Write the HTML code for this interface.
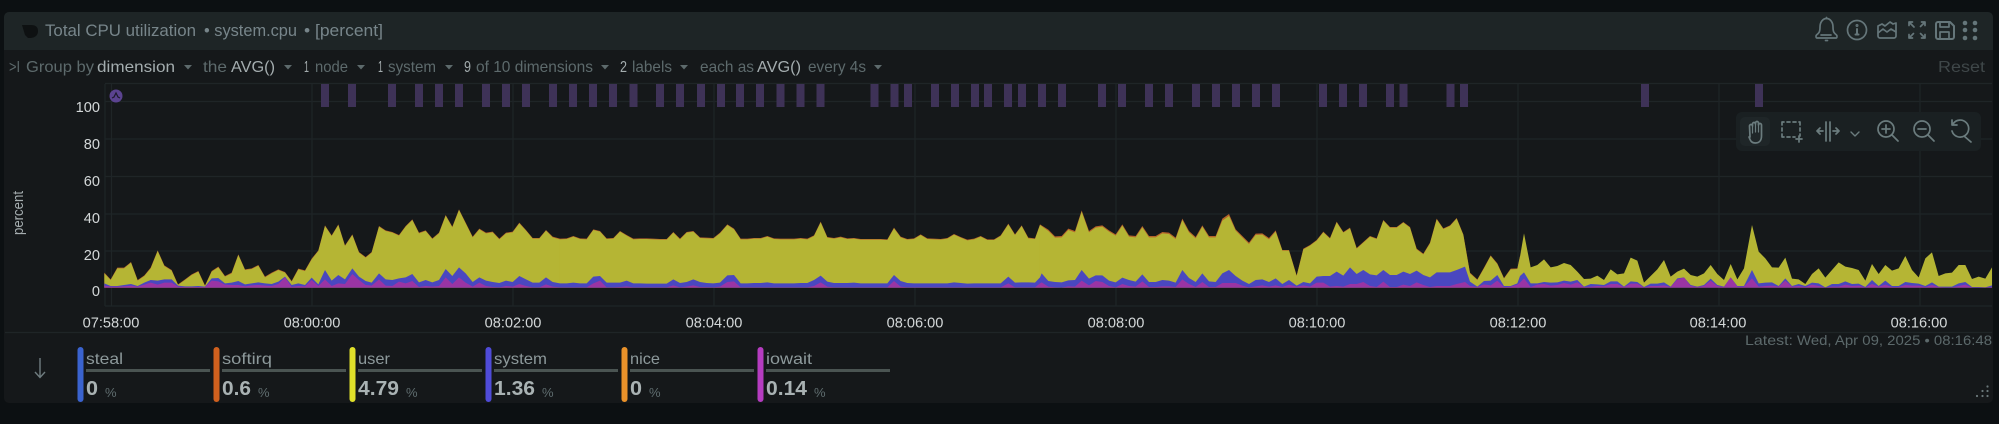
<!DOCTYPE html>
<html><head><meta charset="utf-8"><style>
html,body{margin:0;padding:0;background:#0c1012;width:1999px;height:424px;overflow:hidden}
svg{display:block;filter:blur(.35px)}
text{font-family:"Liberation Sans",sans-serif}
.t{fill:#77858a;font-size:16.5px}
.f{fill:#5d6a6c;font-size:16px}
.b{fill:#a4adaf;font-size:16px}
.ax{fill:#d3d7d8;font-size:14.6px}
.n{fill:#8d999b;font-size:16px}
.v{fill:#a9b2b3;font-size:20px;font-weight:bold}
.u{fill:#5f6d6f;font-size:13px}
.ic{fill:none;stroke:#65767a;stroke-width:1.7;stroke-linecap:round;stroke-linejoin:round}
.ti{fill:none;stroke:#6b7c7e;stroke-width:1.7;stroke-linecap:round;stroke-linejoin:round}
</style></head><body>
<svg width="1999" height="424" viewBox="0 0 1999 424" xmlns="http://www.w3.org/2000/svg">
<rect width="1999" height="424" fill="#0c1012"/>
<rect x="4" y="12" width="1989" height="391" rx="5" fill="#15181a"/>
<path d="M4 50V17a5 5 0 0 1 5-5H1988a5 5 0 0 1 5 5V50Z" fill="#1e2526"/>
<path d="M22 25h9q7 0 7 6t-7 7h-3l-3-3Z" fill="#0e1112"/>
<text class="t" x="45" y="36" textLength="151" lengthAdjust="spacingAndGlyphs">Total CPU utilization</text>
<text class="t" x="204" y="36" textLength="93" lengthAdjust="spacingAndGlyphs">• system.cpu</text>
<text class="t" x="304" y="36" textLength="79" lengthAdjust="spacingAndGlyphs">• [percent]</text>

<!-- header icons -->
<g class="ic">
<path d="M1817 38h19c1 0 1.500-2 .5-3-2.500-2-3.500-3-3.500-8 0-5-3-8.500-6.500-8.500s-6.500 3.500-6.500 8.500c0 5-1 6-3.500 8-1 1-.5 3 .5 3Z"/><path d="M1826.500 18.500v-1"/><path d="M1821 35h10"/><path d="M1825.500 40.500h2"/>
<circle cx="1857" cy="30" r="9.500"/><path d="M1857 29v5.500M1855.500 34.500h3" stroke-width="2"/><circle cx="1857" cy="25.500" r=".6" stroke-width="1.800"/>
<path d="M1878 26l4-2 3 2 5-4 3 2 3-1v13a2 2 0 0 1-2 2h-14a2 2 0 0 1-2-2Z"/><path d="M1878 33l5-4 4 3 4-3 5 3"/>
<path d="M1909 22l5 5M1909 22v3.500M1909 22h3.500M1925 22l-4.500 4.500M1925 22v3.500M1925 22h-3.500M1909 38l4.500-4.500M1909 38v-3.500M1909 38h3.500M1925 38l-4.500-4.500M1925 38v-3.500M1925 38h-3.500"/>
<path d="M1936 24a2 2 0 0 1 2-2h12l4 4v11a2 2 0 0 1-2 2h-14a2 2 0 0 1-2-2Z" stroke-width="2"/><path d="M1940 22v5h9v-5M1940 39v-7h9v7"/>
</g>
<g fill="#65767a"><circle cx="1965" cy="23" r="2.300"/><circle cx="1975" cy="23" r="2.300"/><circle cx="1965" cy="30" r="2.300"/><circle cx="1975" cy="30" r="2.300"/><circle cx="1965" cy="38" r="2.300"/><circle cx="1975" cy="38" r="2.300"/></g>

<!-- filter row -->
<text class="f" x="9" y="72" textLength="11" lengthAdjust="spacingAndGlyphs">&gt;I</text>
<text class="f" x="26" y="72" textLength="68" lengthAdjust="spacingAndGlyphs">Group by</text>
<text class="b" x="97" y="72" textLength="78" lengthAdjust="spacingAndGlyphs">dimension</text>
<text class="f" x="203" y="72" textLength="24" lengthAdjust="spacingAndGlyphs">the</text>
<text class="b" x="231" y="72" textLength="44" lengthAdjust="spacingAndGlyphs">AVG()</text>
<text class="b" x="304" y="72" textLength="5" lengthAdjust="spacingAndGlyphs">1</text>
<text class="f" x="315" y="72" textLength="33" lengthAdjust="spacingAndGlyphs">node</text>
<text class="b" x="378" y="72" textLength="5" lengthAdjust="spacingAndGlyphs">1</text>
<text class="f" x="388" y="72" textLength="48" lengthAdjust="spacingAndGlyphs">system</text>
<text class="b" x="464" y="72" textLength="7" lengthAdjust="spacingAndGlyphs">9</text>
<text class="f" x="476" y="72" textLength="117" lengthAdjust="spacingAndGlyphs">of 10 dimensions</text>
<text class="b" x="620" y="72" textLength="7" lengthAdjust="spacingAndGlyphs">2</text>
<text class="f" x="632" y="72" textLength="40" lengthAdjust="spacingAndGlyphs">labels</text>
<text class="f" x="700" y="72" textLength="54" lengthAdjust="spacingAndGlyphs">each as</text>
<text class="b" x="757" y="72" textLength="44" lengthAdjust="spacingAndGlyphs">AVG()</text>
<text class="f" x="808" y="72" textLength="58" lengthAdjust="spacingAndGlyphs">every 4s</text>
<g fill="#5d6a6c"><path d="M184 65h8l-4 4.500ZM284 65h8l-4 4.500ZM357 65h8l-4 4.500ZM445 65h8l-4 4.500ZM601 65h8l-4 4.500ZM680 65h8l-4 4.500ZM874 65h8l-4 4.500Z"/></g>
<text x="1938" y="72" textLength="47" lengthAdjust="spacingAndGlyphs" fill="#3f4749" font-size="15.500">Reset</text>

<!-- grid -->
<g stroke="#1f2527" stroke-width="1.200" fill="none">
<path d="M105 83.500H1992M105 101.500H1992M105 139H1992M105 176.500H1992M105 214H1992M105 251H1992M105 306H1992"/>
<path d="M105 84V306M111.500 84V306M312 84V306M513 84V306M714 84V306M915 84V306M1116 84V306M1317 84V306M1518 84V306M1719 84V306M1920 84V306"/>
<path d="M5 332.500H1992"/>
</g>

<!-- annotations -->
<g fill="#3e3257">
<rect x="321" y="84" width="8" height="23"/><rect x="348" y="84" width="8" height="23"/><rect x="388" y="84" width="8" height="23"/><rect x="415" y="84" width="8" height="23"/><rect x="435" y="84" width="8" height="23"/><rect x="455" y="84" width="8" height="23"/><rect x="482" y="84" width="8" height="23"/><rect x="502" y="84" width="8" height="23"/><rect x="522" y="84" width="8" height="23"/><rect x="549" y="84" width="8" height="23"/><rect x="569" y="84" width="8" height="23"/><rect x="589" y="84" width="8" height="23"/><rect x="609" y="84" width="8" height="23"/><rect x="629.500" y="84" width="8" height="23"/><rect x="656" y="84" width="8" height="23"/><rect x="676" y="84" width="8" height="23"/><rect x="697" y="84" width="8" height="23"/><rect x="717" y="84" width="8" height="23"/><rect x="736" y="84" width="8" height="23"/><rect x="756" y="84" width="8" height="23"/><rect x="776.500" y="84" width="8" height="23"/><rect x="796.500" y="84" width="8" height="23"/><rect x="816.500" y="84" width="8" height="23"/><rect x="870.500" y="84" width="8" height="23"/><rect x="890.500" y="84" width="8" height="23"/><rect x="904" y="84" width="8" height="23"/><rect x="931" y="84" width="8" height="23"/><rect x="951" y="84" width="8" height="23"/><rect x="971" y="84" width="8" height="23"/><rect x="984" y="84" width="8" height="23"/><rect x="1004" y="84" width="8" height="23"/><rect x="1018" y="84" width="8" height="23"/><rect x="1038" y="84" width="8" height="23"/><rect x="1058" y="84" width="8" height="23"/><rect x="1098" y="84" width="8" height="23"/><rect x="1118" y="84" width="8" height="23"/><rect x="1145" y="84" width="8" height="23"/><rect x="1165" y="84" width="8" height="23"/><rect x="1192" y="84" width="8" height="23"/><rect x="1212" y="84" width="8" height="23"/><rect x="1232" y="84" width="8" height="23"/><rect x="1252" y="84" width="8" height="23"/><rect x="1272" y="84" width="8" height="23"/><rect x="1319" y="84" width="8" height="23"/><rect x="1339" y="84" width="8" height="23"/><rect x="1359" y="84" width="8" height="23"/><rect x="1386" y="84" width="8" height="23"/><rect x="1399.500" y="84" width="8" height="23"/><rect x="1446.500" y="84" width="8" height="23"/><rect x="1460" y="84" width="8" height="23"/><rect x="1641" y="84" width="8" height="23"/><rect x="1755" y="84" width="8" height="23"/>
</g>
<circle cx="116" cy="96" r="6.500" fill="#5b4390"/>
<path d="M112 98l2-1 2-4 2 4 2 1" fill="none" stroke="#1c1a2c" stroke-width="1.200"/>

<!-- chart: section 1 -->
<g transform="translate(60 190) scale(.33333)">
<polygon fill="#b5622a" points="133,293 133,248 152,268 172,233 192,233 213,216 233,270 253,256 272,233 293,181 313,226 335,240 354,283 375,268 395,253 415,243 435,286 455,243 475,230 495,258 515,248 535,193 555,238 575,235 595,225 615,260 635,248 655,238 675,246 695,273 715,236 735,241 755,206 775,181 795,106 815,136 835,103 855,166 877,133 897,186 917,201 935,186 957,108 977,121 997,126 1017,135 1037,108 1057,88 1077,128 1097,121 1117,145 1137,128 1157,75 1177,110 1197,58 1217,98 1238,140 1258,116 1278,128 1298,125 1318,146 1338,128 1358,125 1378,98 1398,120 1418,144 1438,144 1458,120 1478,140 1500,146 1500,293"/>
<polygon fill="#b5b534" points="133,293 133,250 152,270 172,235 192,235 213,218 233,272 253,258 272,235 293,183 313,228 335,242 354,285 375,270 395,255 415,245 435,288 455,245 475,232 495,260 515,250 535,195 555,240 575,237 595,227 615,262 635,250 655,240 675,248 695,275 715,238 735,243 755,208 775,183 795,108 815,138 835,105 855,168 877,135 897,188 917,203 935,188 957,110 977,123 997,128 1017,137 1037,110 1057,90 1077,130 1097,123 1117,147 1137,130 1157,77 1177,112 1197,60 1217,100 1238,142 1258,118 1278,130 1298,127 1318,148 1338,130 1358,127 1378,100 1398,122 1418,146 1438,146 1458,122 1478,142 1500,148 1500,293"/>
<polygon fill="#4a47c0" points="133,293 133,280 152,288 172,288 192,285 213,282 233,288 253,278 272,270 293,272 313,268 335,268 354,287 375,289 395,289 415,288 435,290 455,265 475,264 495,280 515,278 535,273 555,283 575,280 595,277 615,280 635,282 655,275 675,260 695,285 715,280 735,285 755,263 775,283 795,240 815,272 835,255 855,268 877,235 897,260 917,273 935,278 957,250 977,268 997,270 1017,265 1037,262 1057,252 1077,277 1097,270 1117,277 1137,270 1157,237 1177,258 1197,232 1217,250 1238,276 1258,262 1278,272 1298,276 1318,279 1338,272 1358,276 1378,258 1398,268 1418,278 1438,278 1458,262 1478,276 1500,280 1500,293"/>
<polygon fill="#9a34a4" points="133,293 133,287 152,290 172,290 192,289 213,287 233,290 253,284 272,278 293,284 313,278 335,278 354,290 375,291 395,291 415,291 435,291 455,272 475,274 495,284 515,285 535,285 555,289 575,286 595,285 615,287 635,288 655,282 675,262 695,291 715,288 735,289 755,270 775,288 795,268 815,288 835,280 855,282 877,252 897,270 917,285 935,287 957,268 977,287 997,288 1017,275 1037,280 1057,273 1077,291 1097,288 1117,290 1137,288 1157,262 1177,282 1197,262 1217,278 1238,290 1258,278 1278,288 1298,291 1318,292 1338,288 1358,290 1378,282 1398,288 1418,292 1438,292 1458,283 1478,290 1500,292 1500,293"/>
</g>
<!-- section 2 -->
<g transform="translate(540 190) scale(.33333)">
<polygon fill="#b5622a" points="60,293 60,146 80,145 100,138 120,145 140,146 160,118 180,123 200,145 220,144 240,123 260,135 280,146 300,145 320,145 340,146 360,147 380,147 400,126 420,146 440,126 460,123 480,142 500,143 520,144 540,128 562,103 582,116 602,146 622,146 642,144 662,144 682,138 702,145 722,146 742,146 762,146 782,144 802,146 822,136 842,95 862,141 882,144 902,140 922,145 942,144 962,147 982,147 1002,147 1022,147 1042,148 1062,113 1082,140 1102,147 1122,145 1142,133 1162,145 1182,146 1202,147 1222,144 1242,132 1262,141 1282,149 1302,146 1322,138 1342,148 1362,148 1382,136 1405,101 1425,133 1445,106 1465,143 1485,145 1500,103 1500,293"/>
<polygon fill="#b5b534" points="60,293 60,148 80,147 100,140 120,147 140,148 160,120 180,125 200,147 220,146 240,125 260,137 280,148 300,147 320,147 340,148 360,149 380,149 400,128 420,148 440,128 460,125 480,144 500,145 520,146 540,130 562,105 582,118 602,148 622,148 642,146 662,146 682,140 702,147 722,148 742,148 762,148 782,146 802,148 822,138 842,97 862,143 882,146 902,142 922,147 942,146 962,149 982,149 1002,149 1022,149 1042,150 1062,115 1082,142 1102,149 1122,147 1142,135 1162,147 1182,148 1202,149 1222,146 1242,134 1262,143 1282,151 1302,148 1322,140 1342,150 1362,150 1382,138 1405,103 1425,135 1445,108 1465,145 1485,147 1500,105 1500,293"/>
<polygon fill="#4a47c0" points="60,293 60,280 80,280 100,278 120,280 140,280 160,260 180,258 200,278 220,278 240,278 260,272 280,280 300,280 320,281 340,281 360,281 380,281 400,268 420,279 440,276 460,268 480,276 500,279 520,280 540,278 562,256 582,255 602,280 622,280 642,279 662,279 682,277 702,280 722,280 742,280 762,280 782,279 802,279 822,270 842,257 862,275 882,279 902,279 922,279 942,278 962,280 982,280 1002,280 1022,280 1042,280 1062,255 1082,273 1102,279 1122,280 1142,280 1162,280 1182,280 1202,280 1222,280 1242,277 1262,279 1282,281 1302,280 1322,280 1342,280 1362,280 1382,280 1405,260 1425,278 1445,277 1465,277 1485,278 1500,262 1500,293"/>
<polygon fill="#9a34a4" points="60,293 60,292 140,292 160,280 180,272 200,292 220,292 240,291 260,289 280,292 380,292 400,286 420,292 440,290 460,286 480,291 520,292 540,290 562,276 582,274 602,292 802,292 822,288 842,277 862,290 882,292 1042,292 1062,273 1082,290 1102,292 1382,292 1405,280 1425,292 1485,292 1500,280 1500,293"/>
</g>
<!-- section 3 -->
<g transform="translate(1020 190) scale(.33333)">
<polygon fill="#b5622a" points="60,293 60,103 85,119 105,139 125,138 145,116 165,123 185,61 207,123 227,109 247,106 267,121 287,133 307,103 327,136 347,138 367,108 387,138 407,138 427,126 447,128 467,143 487,86 507,123 527,141 547,106 567,138 587,138 607,86 627,72 647,118 667,138 687,158 707,131 727,130 747,144 767,121 787,180 807,180 830,256 850,176 870,165 890,150 910,125 930,144 950,95 970,126 990,113 1010,174 1030,156 1050,138 1070,145 1090,90 1110,111 1130,111 1150,96 1170,111 1190,176 1210,191 1230,158 1250,86 1270,115 1290,106 1310,84 1330,133 1350,248 1372,268 1392,233 1412,196 1432,220 1452,264 1472,236 1492,235 1500,198 1500,293"/>
<polygon fill="#b5b534" points="60,293 60,105 85,123 105,143 125,142 145,120 165,127 185,65 207,127 227,113 247,110 267,125 287,137 307,107 327,140 347,142 367,112 387,142 407,142 427,130 447,132 467,147 487,90 507,127 527,145 547,110 567,142 587,142 607,92 627,78 647,122 667,142 687,162 707,135 727,134 747,148 767,125 787,182 807,182 830,258 850,178 870,167 890,152 910,127 930,146 950,97 970,128 990,115 1010,176 1030,158 1050,140 1070,147 1090,92 1110,113 1130,113 1150,98 1170,113 1190,178 1210,193 1230,160 1250,88 1270,117 1290,108 1310,86 1330,135 1350,250 1372,270 1392,235 1412,198 1432,222 1452,266 1472,238 1492,237 1500,200 1500,293"/>
<polygon fill="#4a47c0" points="60,293 60,262 65,250 85,273 105,276 125,277 145,271 165,270 185,240 207,266 227,256 247,256 267,272 287,277 307,263 327,270 347,275 367,253 387,276 407,276 427,270 447,272 467,278 487,240 507,264 527,276 547,250 567,274 587,276 607,250 627,240 647,258 667,272 687,282 707,270 727,268 747,276 767,265 787,282 807,270 830,287 850,276 870,280 890,260 910,258 930,258 950,245 970,257 990,232 1010,252 1030,240 1050,253 1070,256 1090,240 1110,255 1130,255 1150,245 1170,252 1190,242 1210,255 1230,262 1250,247 1270,247 1290,247 1310,240 1335,230 1350,275 1372,290 1392,273 1412,272 1432,255 1452,288 1472,288 1492,280 1500,258 1500,293"/>
<polygon fill="#9a34a4" points="60,293 60,280 65,277 85,290 105,292 125,293 145,289 165,290 185,272 207,286 227,273 247,276 267,288 287,292 307,282 327,288 347,290 367,274 387,291 407,291 427,289 447,289 467,291 487,268 507,282 527,291 547,276 567,291 587,291 607,279 627,279 647,279 667,287 687,292 707,289 727,286 747,290 767,286 787,291 807,284 830,290 850,286 870,290 890,278 910,278 930,290 950,288 970,290 990,282 1010,282 1030,276 1050,288 1070,291 1090,275 1110,291 1130,291 1150,284 1170,288 1190,277 1210,285 1230,291 1250,288 1270,288 1290,288 1310,282 1335,276 1350,288 1372,291 1392,283 1412,286 1432,272 1452,291 1472,290 1492,284 1500,278 1500,293"/>
</g>
<!-- section 4 -->
<g transform="translate(1500 190) scale(.33333)">
<polygon fill="#b5b534" points="60,293 60,200 72,130 92,232 112,225 132,208 152,232 172,228 192,219 212,225 232,245 252,267 272,266 292,257 312,270 332,238 352,253 372,250 392,203 412,212 432,278 452,258 472,238 492,210 512,260 532,245 552,236 572,255 592,260 612,250 632,225 652,252 672,270 692,222 712,268 732,235 756,105 776,185 796,205 816,232 836,233 856,203 876,266 896,268 916,282 936,252 956,235 976,263 996,240 1016,217 1036,230 1056,234 1076,240 1096,272 1116,222 1136,252 1156,225 1176,242 1196,235 1216,198 1236,240 1256,262 1276,205 1296,187 1316,258 1336,250 1356,248 1376,225 1396,225 1416,267 1436,260 1456,266 1476,232 1476,293"/>
<polygon fill="#4a47c0" points="60,293 60,258 72,247 92,280 112,280 132,276 152,278 172,277 192,272 212,275 232,270 252,290 272,282 292,283 312,285 332,274 352,274 372,290 392,274 412,276 432,291 452,281 472,281 492,277 512,290 532,265 552,262 572,285 592,290 612,285 632,266 652,285 672,290 692,262 712,288 732,288 756,240 776,280 796,278 816,277 836,288 856,265 876,288 896,282 916,288 936,278 956,280 976,292 996,282 1016,282 1036,274 1056,282 1076,281 1096,291 1116,270 1136,288 1156,272 1176,288 1196,288 1216,276 1236,279 1256,281 1276,288 1296,277 1316,290 1336,290 1356,290 1376,280 1396,276 1416,291 1436,291 1456,292 1476,286 1476,293"/>
<polygon fill="#9a34a4" points="60,293 60,278 72,265 92,291 112,284 132,282 152,287 172,285 192,279 212,284 232,277 252,291 272,290 292,288 312,289 332,282 352,282 372,291 392,281 412,281 432,292 452,288 472,288 492,286 512,291 532,268 552,262 572,288 592,291 612,288 632,272 652,288 672,291 692,262 712,290 732,290 756,265 776,290 796,288 816,287 836,290 856,272 876,290 896,288 916,291 936,284 956,288 976,292 996,290 1016,290 1036,284 1056,288 1076,287 1096,292 1116,282 1136,290 1156,284 1176,291 1196,291 1216,285 1236,287 1256,287 1276,291 1296,285 1316,291 1336,292 1356,292 1376,288 1396,284 1416,292 1436,292 1456,292 1476,291 1476,293"/>
</g>

<!-- y axis -->
<g class="ax" text-anchor="end">
<text x="100" y="112">100</text><text x="100" y="149">80</text><text x="100" y="186">60</text><text x="100" y="223">40</text><text x="100" y="260">20</text><text x="100" y="296">0</text>
</g>
<text transform="translate(23 235) rotate(-90)" fill="#a5adaf" font-size="14.500" textLength="44" lengthAdjust="spacingAndGlyphs">percent</text>

<!-- x axis -->
<g class="ax" text-anchor="middle">
<text x="111" y="327.500">07:58:00</text><text x="312" y="327.500">08:00:00</text><text x="513" y="327.500">08:02:00</text><text x="714" y="327.500">08:04:00</text><text x="915" y="327.500">08:06:00</text><text x="1116" y="327.500">08:08:00</text><text x="1317" y="327.500">08:10:00</text><text x="1518" y="327.500">08:12:00</text><text x="1718" y="327.500">08:14:00</text><text x="1919" y="327.500">08:16:00</text>
</g>
<text x="1745" y="345" fill="#5c696b" font-size="14" textLength="48" lengthAdjust="spacingAndGlyphs">Latest:</text>
<text x="1797" y="345" fill="#5c696b" font-size="14" textLength="195" lengthAdjust="spacingAndGlyphs">Wed, Apr 09, 2025 • 08:16:48</text>

<!-- toolbar -->
<rect x="1736" y="112" width="245" height="39" rx="6" fill="#1a2022"/>
<rect x="1740" y="117" width="30" height="29" rx="5" fill="#1f2628"/>
<g class="ti" stroke="#a7b3b3">
<path d="M1750 137l-.5-11a1.500 1.500 0 0 1 3 0v-2a1.500 1.500 0 0 1 3 0v-1a1.500 1.500 0 0 1 3 0v2a1.500 1.500 0 0 1 3 0v11c0 4-2 7-6 7s-5-2-6.500-6"/>
<path d="M1752.500 126v7M1755.500 124v8M1758.500 124v8" stroke-width="1.200"/>
</g>
<g class="ti">
<path d="M1782 122h2M1787 122h3M1793 122h3M1799 122h1v3M1800 128v3M1800 134v2M1782 122v3M1782 128v3M1782 134v3h2M1787 137h3M1793 137h2"/>
<path d="M1799 136v6M1796 139h6"/>
<path d="M1826 122v19M1830 122v19M1823 131h-6M1820 128l-3 3 3 3M1833 131h6M1836 128l3 3-3 3"/>
<path d="M1851 132l4 4 4-4" stroke-width="1.400"/>
<circle cx="1886" cy="129" r="8"/><path d="M1892 135l6 6M1886 125v8M1882 129h8"/>
<circle cx="1922" cy="129" r="8"/><path d="M1928 135l6 6M1918 129h8"/>
<path d="M1953 124a8.500 8.500 0 1 1-1 7M1952 120v5h5M1964 136l7 6"/>
</g>

<!-- legend -->
<path d="M40 358v19M35 372l5 5.500 5-5.500" fill="none" stroke="#6f7d80" stroke-width="1.400"/>
<g>
<rect x="77.500" y="347" width="6" height="55" rx="3" fill="#3a63cf"/>
<rect x="213.500" y="347" width="6" height="55" rx="3" fill="#d0601e"/>
<rect x="349.500" y="347" width="6" height="55" rx="3" fill="#e0e02a"/>
<rect x="485.500" y="347" width="6" height="55" rx="3" fill="#4f4bd8"/>
<rect x="621.500" y="347" width="6" height="55" rx="3" fill="#ea922a"/>
<rect x="757.500" y="347" width="6" height="55" rx="3" fill="#b53cc0"/>
</g>
<g fill="#4a5452">
<rect x="86" y="369" width="124" height="3"/><rect x="222" y="369" width="124" height="3"/><rect x="358" y="369" width="124" height="3"/><rect x="494" y="369" width="124" height="3"/><rect x="630" y="369" width="124" height="3"/><rect x="766" y="369" width="124" height="3"/>
</g>
<text class="n" x="86" y="364" textLength="37" lengthAdjust="spacingAndGlyphs">steal</text>
<text class="n" x="222" y="364" textLength="50" lengthAdjust="spacingAndGlyphs">softirq</text>
<text class="n" x="358" y="364" textLength="32" lengthAdjust="spacingAndGlyphs">user</text>
<text class="n" x="494" y="364" textLength="53" lengthAdjust="spacingAndGlyphs">system</text>
<text class="n" x="630" y="364" textLength="30" lengthAdjust="spacingAndGlyphs">nice</text>
<text class="n" x="766" y="364" textLength="46" lengthAdjust="spacingAndGlyphs">iowait</text>
<text class="v" x="86" y="395" textLength="12" lengthAdjust="spacingAndGlyphs">0</text><text class="u" x="105" y="397">%</text>
<text class="v" x="222" y="395" textLength="29" lengthAdjust="spacingAndGlyphs">0.6</text><text class="u" x="258" y="397">%</text>
<text class="v" x="358" y="395" textLength="41" lengthAdjust="spacingAndGlyphs">4.79</text><text class="u" x="406" y="397">%</text>
<text class="v" x="494" y="395" textLength="41" lengthAdjust="spacingAndGlyphs">1.36</text><text class="u" x="542" y="397">%</text>
<text class="v" x="630" y="395" textLength="12" lengthAdjust="spacingAndGlyphs">0</text><text class="u" x="649" y="397">%</text>
<text class="v" x="766" y="395" textLength="41" lengthAdjust="spacingAndGlyphs">0.14</text><text class="u" x="814" y="397">%</text>

<!-- resize dots -->
<g fill="#6b787a"><circle cx="1987.500" cy="386.500" r="1.100"/><circle cx="1987.500" cy="391" r="1.100"/><circle cx="1982.500" cy="391" r="1.100"/><circle cx="1987.500" cy="396" r="1.100"/><circle cx="1982.500" cy="396" r="1.100"/><circle cx="1977" cy="396" r="1.100"/></g>
</svg>
</body></html>
